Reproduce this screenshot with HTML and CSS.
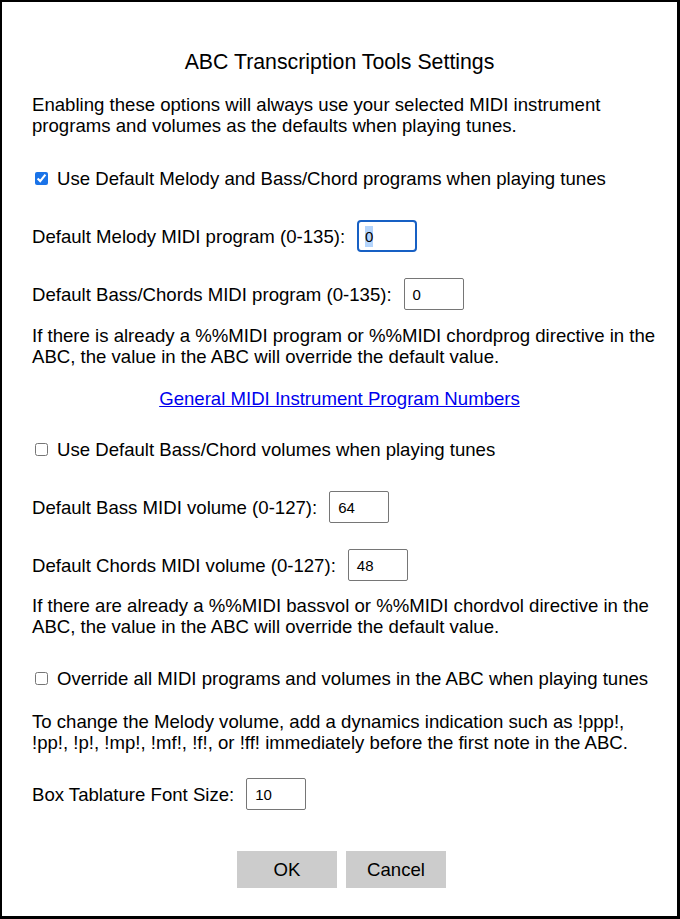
FILE: index.html
```html
<!DOCTYPE html>
<html>
<head>
<meta charset="utf-8">
<link rel="stylesheet" href="styles.css">
</head>
<body>
<div class="dialog">
  <h1 class="title">ABC Transcription Tools Settings</h1>
  <p class="text intro">Enabling these options will always use your selected MIDI instrument programs and volumes as the defaults when playing tunes.</p>
  <label class="check c1"><input type="checkbox" checked> Use Default Melody and Bass/Chord programs when playing tunes</label>
  <div class="row r1"><span>Default Melody MIDI program (0-135):</span><span class="field focused"><span class="sel">0</span></span></div>
  <div class="row r2"><span>Default Bass/Chords MIDI program (0-135):</span><span class="field">0</span></div>
  <p class="text p2">If there is already a %%MIDI program or %%MIDI chordprog directive in the ABC, the value in the ABC will override the default value.</p>
  <p class="linkline"><a href="#">General MIDI Instrument Program Numbers</a></p>
  <label class="check c2"><input type="checkbox"> Use Default Bass/Chord volumes when playing tunes</label>
  <div class="row r3"><span>Default Bass MIDI volume (0-127):</span><span class="field">64</span></div>
  <div class="row r4"><span>Default Chords MIDI volume (0-127):</span><span class="field">48</span></div>
  <p class="text p3">If there are already a %%MIDI bassvol or %%MIDI chordvol directive in the ABC, the value in the ABC will override the default value.</p>
  <label class="check c3"><input type="checkbox"> Override all MIDI programs and volumes in the ABC when playing tunes</label>
  <p class="text p4">To change the Melody volume, add a dynamics indication such as !ppp!, !pp!, !p!, !mp!, !mf!, !f!, or !ff! immediately before the first note in the ABC.</p>
  <div class="row r5"><span>Box Tablature Font Size:</span><span class="field">10</span></div>
  <div class="buttons"><button class="btn">OK</button><button class="btn">Cancel</button></div>
</div>
</body>
</html>
```
FILE: styles.css
```css
html, body {
  margin: 0;
  padding: 0;
  background: #fff;
}
body {
  font-family: "Liberation Sans", Arial, Helvetica, sans-serif;
  color: #000;
}
.dialog {
  box-sizing: border-box;
  width: 680px;
  height: 919px;
  border-style: solid;
  border-color: #000;
  border-width: 2px 3px 3px 2px;
  padding: 0 15px 0 30px;
  display: flex;
  flex-direction: column;
  align-items: stretch;
}
.title {
  margin: 48px 0 0 0;
  font-size: 21.3px;
  font-weight: normal;
  line-height: 24px;
  text-align: center;
  padding-right: 15px;
}
.text {
  margin: 0;
  font-size: 18.6px;
  line-height: 21px;
}
.intro { margin-top: 20px; }
.check {
  display: flex;
  align-items: center;
  font-size: 18.6px;
  line-height: 21px;
}
.check input {
  width: 13px;
  height: 13px;
  margin: 0 9px 0 3px;
  accent-color: #1a73e8;
}
.c1 { margin-top: 32px; }
.c2 { margin-top: 30px; }
.c3 { margin-top: 31px; }
.row {
  display: flex;
  align-items: center;
  font-size: 18.6px;
  line-height: 21px;
  height: 32px;
}
.row .field {
  box-sizing: border-box;
  width: 60px;
  height: 32px;
  margin-left: 12px;
  border: 1px solid #767676;
  border-radius: 2px;
  font-size: 15px;
  padding-left: 8px;
  display: flex;
  align-items: center;
}
.row .field.focused {
  border: 2px solid #1760c4;
  border-radius: 4px;
  padding-left: 6px;
}
.sel { background: #b3d4fc; }
.r1 { margin-top: 31px; }
.r2 { margin-top: 26px; }
.p2 { margin-top: 15px; }
.linkline {
  margin: 21px 0 0 0;
  text-align: center;
  font-size: 18.6px;
  line-height: 21px;
  padding-right: 15px;
}
.linkline a { color: #0000ee; }
.r3 { margin-top: 31px; }
.r4 { margin-top: 26px; }
.p3 { margin-top: 14px; }
.p4 { margin-top: 22px; }
.r5 { margin-top: 25px; }
.buttons {
  margin-top: 41px;
  display: flex;
  justify-content: flex-start;
  gap: 9px;
  padding-left: 205px;
}
.btn {
  width: 100px;
  height: 37px;
  border: none;
  background: #cccccc;
  font-family: "Liberation Sans", Arial, sans-serif;
  font-size: 18.6px;
  color: #000;
  padding: 0;
}
```
